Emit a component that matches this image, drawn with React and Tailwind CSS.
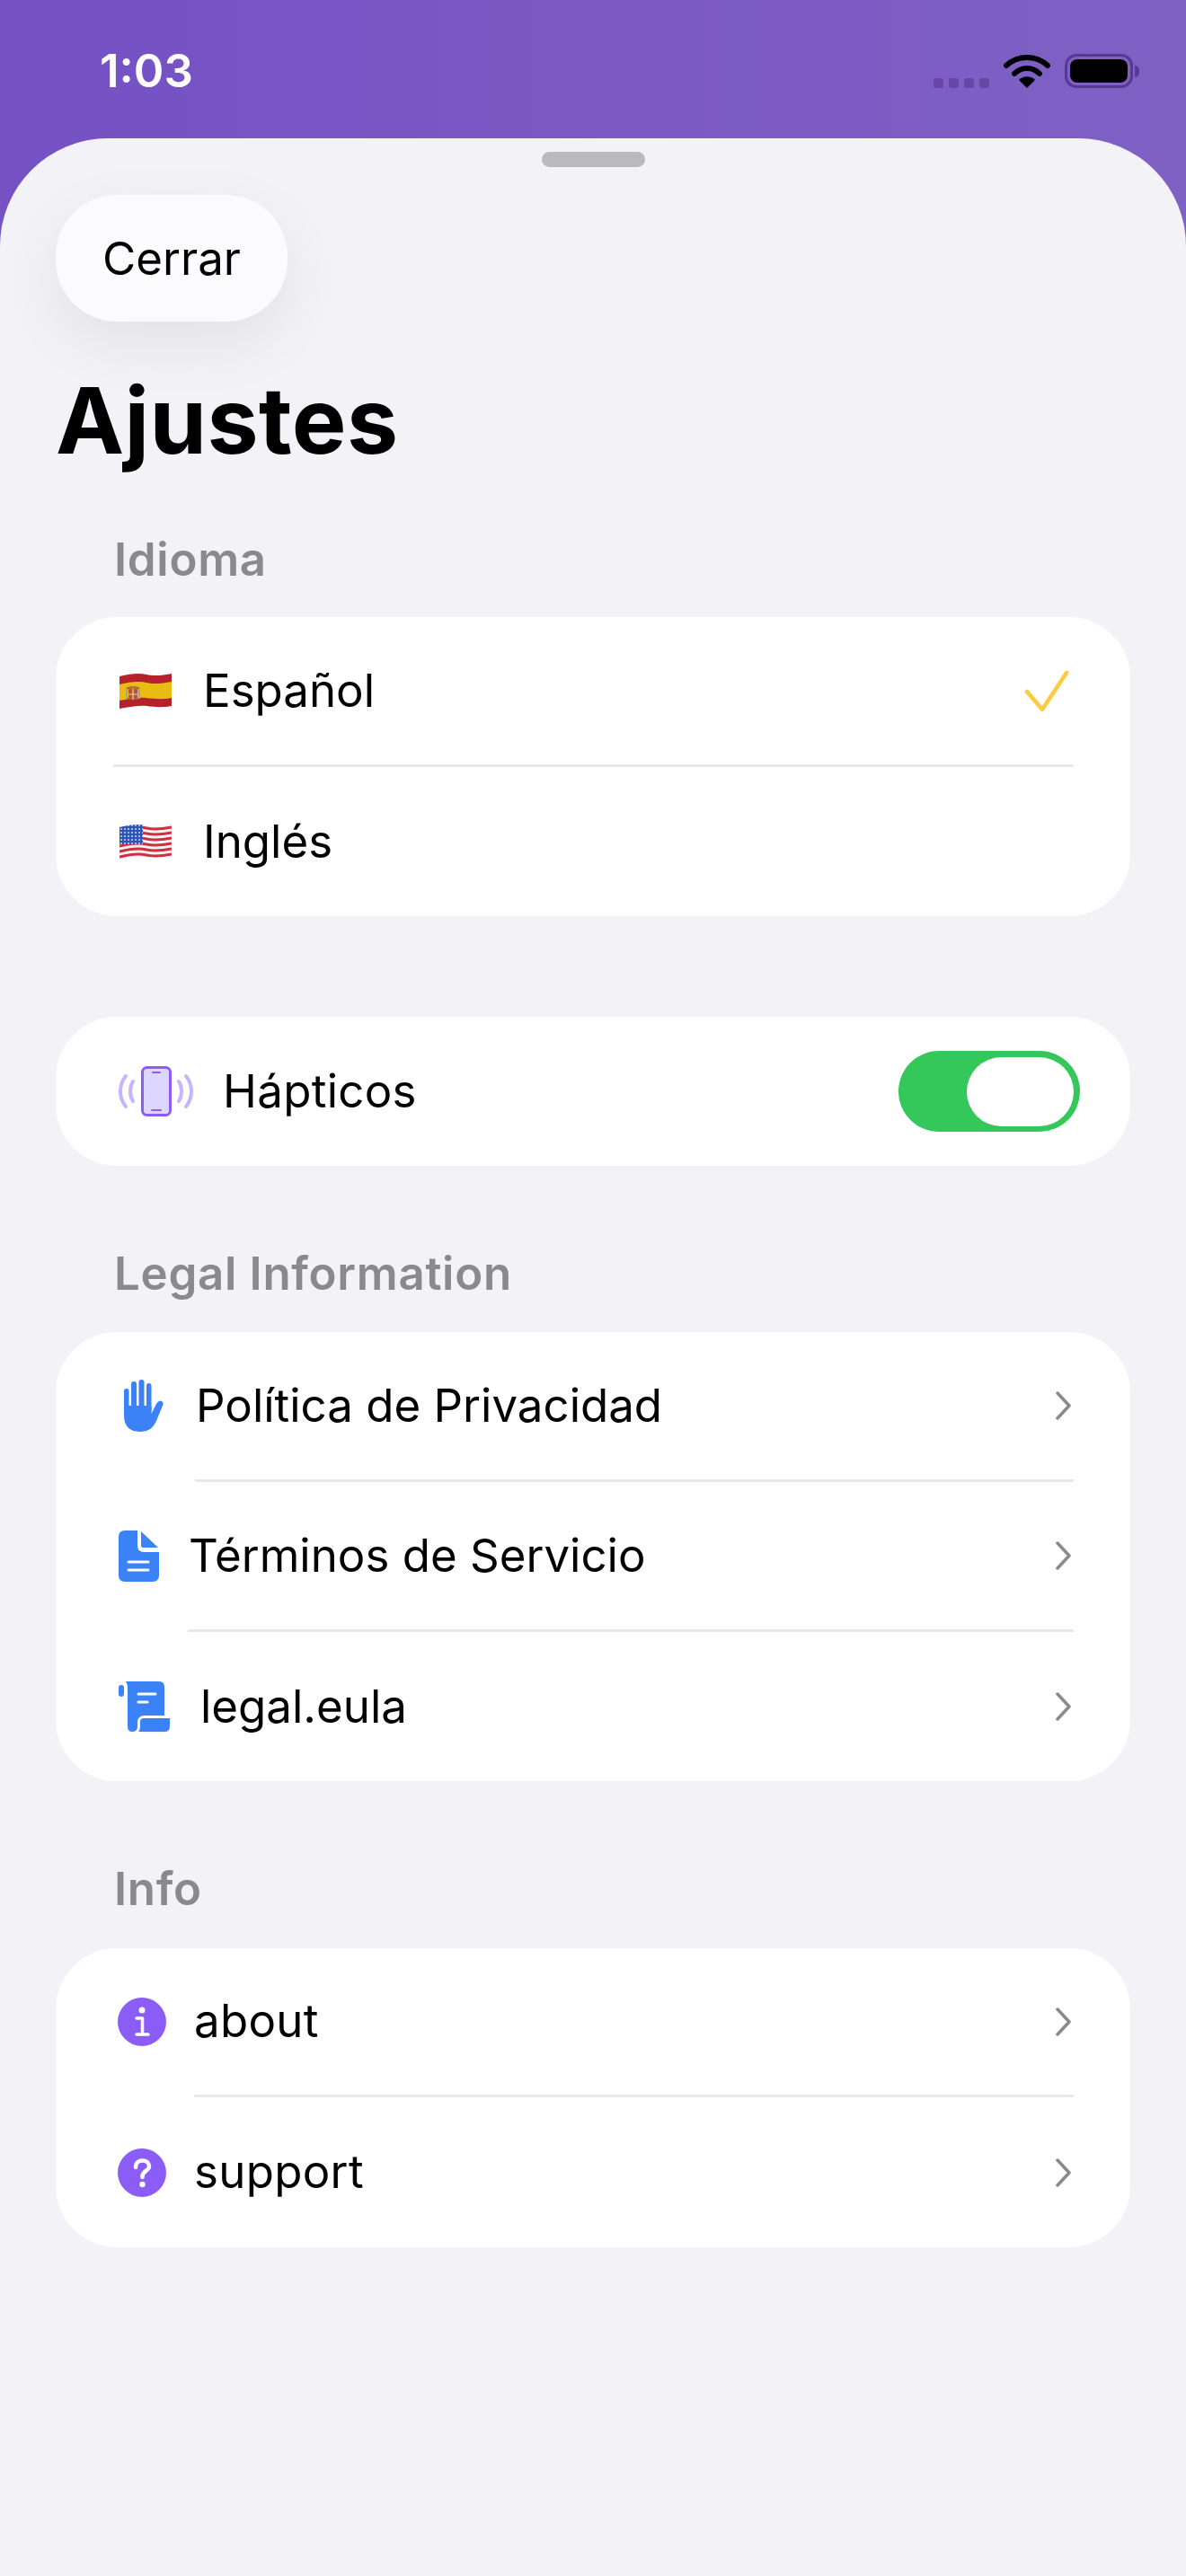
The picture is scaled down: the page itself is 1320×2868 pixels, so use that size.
import React from 'react'

const font = { fontFamily: 'Inter, "Noto Sans", sans-serif' }

function SpainFlag() {
    return (
        <svg width="58" height="41" viewBox="0 0 58 41" className="shrink-0">
            <path d="M0 4C12 1 22 0 30 2S48 3 58 1V37C48 39 38 38 30 37S12 38 0 40Z" fill="#b5222c" />
            <path d="M0 13C12 10 22 9 30 11S48 12 58 10V28C48 30 38 29 30 28S12 29 0 31Z" fill="#eabb12" />
            <path d="M8 17H22M9 29H21" stroke="#8f6a3a" strokeWidth="2" />
            <rect x="10" y="15" width="10" height="3" rx="1.500" fill="#b5752d" />
            <path d="M10 18H20V26Q20 30 15 30Q10 30 10 26Z" fill="#b9503a" />
            <path d="M15 18V30M10 24H20" stroke="#e8d9b0" strokeWidth="1.200" />
            <rect x="7" y="18" width="2" height="11" fill="#a9a196" />
            <rect x="21" y="18" width="2" height="11" fill="#a9a196" />
        </svg>
    )
}

function UsaFlag() {
    const stripes = [6, 12, 18, 24, 30, 36]
    return (
        <svg width="58" height="41" viewBox="0 0 58 41" className="shrink-0">
            <defs>
                <clipPath id="us-wave">
                    <path d="M0 4C12 1 22 0 30 2S48 3 58 1V37C48 39 38 38 30 37S12 38 0 40Z" />
                </clipPath>
                <pattern id="us-stars" width="4" height="4" patternUnits="userSpaceOnUse">
                    <circle cx="2" cy="2" r="0.9" fill="#dfe6f7" />
                </pattern>
            </defs>
            <g clipPath="url(#us-wave)">
                <rect width="58" height="41" fill="#f5f3f3" />
                {stripes.map((y) => (
                    <path key={y} d={`M0 ${y + 1}C12 ${y - 2} 22 ${y - 3} 30 ${y - 1}S48 ${y} 58 ${y - 2}`} fill="none" stroke="#cf2f3f" strokeWidth="3" />
                ))}
                <rect width="26" height="23" fill="#2f55b4" />
                <rect width="26" height="23" fill="url(#us-stars)" />
            </g>
        </svg>
    )
}

function HapticsIcon() {
    return (
        <svg width="85" height="56" viewBox="0 0 85 56" fill="none" className="shrink-0">
            <rect x="27.5" y="1.5" width="31" height="53" rx="5" fill="#ddd6fe" stroke="#8b5cf6" strokeWidth="3" />
            <path d="M39 7H47M38 49H48" stroke="#8b5cf6" strokeWidth="2" strokeLinecap="round" />
            <g stroke="#c4b5fd" strokeWidth="4" strokeLinecap="round">
                <path d="M17 17C13 23 13 33 17 39" />
                <path d="M9 11C1 21 1 35 9 45" />
                <path d="M68 17C72 23 72 33 68 39" />
                <path d="M76 11C84 21 84 35 76 45" />
            </g>
        </svg>
    )
}

function HandIcon() {
    return (
        <svg width="44" height="58" viewBox="0 0 44 58" fill="#3b82f6" className="shrink-0">
            <rect x="0" y="10" width="5.5" height="30" rx="2.75" />
            <rect x="8" y="2" width="6" height="36" rx="3" />
            <rect x="16.5" y="0" width="6" height="38" rx="3" />
            <rect x="25" y="4" width="5.5" height="34" rx="2.75" />
            <path d="M0 29H30.5V38L36 27Q39 22 42 24Q44.500 25.500 43 29L36 46Q31 58 19 58Q0 58 0 40Z" />
        </svg>
    )
}

function DocIcon() {
    return (
        <svg width="45" height="57" viewBox="0 0 45 57" className="shrink-0">
            <path d="M7 0H21V17Q21 24 28 24H45V50Q45 57 38 57H7Q0 57 0 50V7Q0 0 7 0Z" fill="#3b82f6" />
            <path d="M25 1L44 19H27Q25 19 25 17Z" fill="#3b82f6" />
            <path d="M11 35H33M11 44H33" stroke="#fff" strokeWidth="3" strokeLinecap="round" />
        </svg>
    )
}

function ScrollIcon() {
    return (
        <svg width="57" height="56" viewBox="0 0 57 56" className="shrink-0">
            <rect x="0" y="4" width="6" height="13" rx="3" fill="#3b82f6" />
            <path d="M8 0H45Q51 0 51 6V38H29Q21 38 21 46V50Q21 56 15 56Q10 56 10 50V8Q10 3 8 0Z" fill="#3b82f6" />
            <path d="M28 41H57V50Q57 56 51 56H22Q24 54 24 50V45Q24 41 28 41Z" fill="#3b82f6" />
            <path d="M22 14H41M22 23H32" stroke="#fff" strokeWidth="3" strokeLinecap="round" />
        </svg>
    )
}

function InfoIcon() {
    return (
        <svg width="54" height="54" viewBox="0 0 54 54" className="shrink-0">
            <circle cx="27" cy="27" r="27" fill="#8b5cf6" />
            <circle cx="27" cy="14" r="3.500" fill="#fff" />
            <path d="M21 23H27.500V41M21 41H34" fill="none" stroke="#fff" strokeWidth="3.500" strokeLinecap="round" strokeLinejoin="round" />
        </svg>
    )
}

function QuestionIcon() {
    return (
        <svg width="54" height="54" viewBox="0 0 54 54" className="shrink-0">
            <circle cx="27" cy="27" r="27" fill="#8b5cf6" />
            <path d="M20 21C20 16 23 13.500 27.500 13.500C32 13.500 35 16 35 20C35 25 27.500 25 27.500 31V32" fill="none" stroke="#fff" strokeWidth="4.500" strokeLinecap="round" />
            <circle cx="27.500" cy="40" r="3.200" fill="#fff" />
        </svg>
    )
}

function Chevron() {
    return (
        <svg width="22" height="34" viewBox="0 0 22 34" fill="none" className="shrink-0">
            <path d="M7 3L20 17L7 31" stroke="#8a8a8e" strokeWidth="3.500" strokeLinecap="round" strokeLinejoin="round" />
        </svg>
    )
}

function SectionTitle({ children, className }) {
    return <h2 className={`pl-[65px] text-[51px] leading-[62px] font-semibold text-[#8a8a8e] tracking-[0.7px] ${className}`}>{children}</h2>
}

function Divider({ left }) {
    return (
        <div className={`h-[3px] bg-[#e8e8ec] mr-[63px] ${left}`} />
    )
}

export default function App() {
    return (
        <div className="w-[1320px] h-[2868px] flex flex-col bg-gradient-to-r from-[#7551c4] to-[#7f61c4] overflow-hidden" style={font}>
            <header className="h-[154px] shrink-0 flex justify-between pl-[111px] pr-[52px]">
                <span className="mt-[50px] text-[51px] leading-[58px] font-semibold text-white tracking-[0px]">1:03</span>
                <div className="flex items-start pt-[60px]">
                    <div className="flex gap-[6px] mt-[27px] mr-[16px]">
                        <span className="w-[11px] h-[11px] rounded-[3px] bg-[#6747a6]" />
                        <span className="w-[11px] h-[11px] rounded-[3px] bg-[#6747a6]" />
                        <span className="w-[11px] h-[11px] rounded-[3px] bg-[#6747a6]" />
                        <span className="w-[11px] h-[11px] rounded-[3px] bg-[#6747a6]" />
                    </div>
                    <svg width="52" height="38" viewBox="0 0 52 38" fill="none" className="mr-[16px]">
                        <path d="M3 13C16 1 36 1 49 13" stroke="#000" strokeWidth="6" strokeLinecap="round" />
                        <path d="M12 22C20 14 32 14 40 22" stroke="#000" strokeWidth="6" strokeLinecap="round" />
                        <path d="M26 38L17 29C22 24 30 24 35 29Z" fill="#000" />
                    </svg>
                    <div className="w-[76px] h-[38px] rounded-[13px] border-[3px] border-[#553a8e] p-[3px]">
                        <div className="w-full h-full rounded-[8px] bg-black" />
                    </div>
                    <div className="w-[5px] h-[13px] mt-[13px] ml-[2px] rounded-r-full bg-[#553a8e]" />
                </div>
            </header>

            <main className="flex-1 bg-[#f2f2f7] rounded-t-[120px] px-[62px]">
                <div className="w-[115px] h-[17px] mt-[15px] mx-auto rounded-full bg-[#b9b9bf]" />
                <button className="mt-[31px] w-[258px] h-[141px] rounded-[68px] bg-[#fbfbfe] shadow-[0_24px_70px_rgba(0,0,0,0.07)] text-[51px] leading-[62px] text-black tracking-[0px] block">
                    Cerrar
                </button>
                <h1 className="mt-[48px] text-[102px] leading-[124px] font-bold text-black tracking-[0.4px]">Ajustes</h1>

                <SectionTitle className="mt-[62px]">Idioma</SectionTitle>
                <section className="mt-[33px] bg-white rounded-[68px]">
                    <div className="h-[164px] flex items-center pl-[71px] pr-[68px]">
                        <SpainFlag />
                        <span className="ml-[35px] text-[51px] tracking-[0px] flex-1">Español</span>
                        <svg width="50" height="50" viewBox="0 0 50 50" fill="none">
                            <path d="M3 26L20 46L47 5" stroke="#fdcb3f" strokeWidth="4.500" strokeLinecap="round" strokeLinejoin="round" />
                        </svg>
                    </div>
                    <Divider left="ml-[64px]" />
                    <div className="h-[166px] flex items-center pl-[71px]">
                        <UsaFlag />
                        <span className="ml-[35px] text-[51px] tracking-[0px]">Inglés</span>
                    </div>
                </section>

                <section className="mt-[112px] h-[166px] bg-white rounded-[68px] flex items-center pl-[69px] pr-[56px]">
                    <HapticsIcon />
                    <span className="ml-[32px] flex-1 text-[51px] tracking-[0.3px]">Hápticos</span>
                    <div className="w-[202px] h-[90px] rounded-full bg-[#34c759] flex justify-end items-center pr-[7px]">
                        <div className="w-[119px] h-[77px] rounded-full bg-white" />
                    </div>
                </section>

                <SectionTitle className="mt-[89px]">Legal Information</SectionTitle>
                <section className="mt-[34px] bg-white rounded-[68px]">
                    <div className="h-[164px] flex items-center pl-[76px] pr-[66px]">
                        <HandIcon />
                        <span className="ml-[36px] flex-1 text-[51px] tracking-[0px]">Política de Privacidad</span>
                        <Chevron />
                    </div>
                    <Divider left="ml-[155px]" />
                    <div className="h-[164px] flex items-center pl-[70px] pr-[66px]">
                        <DocIcon />
                        <span className="ml-[33px] flex-1 text-[51px] tracking-[0px]">Términos de Servicio</span>
                        <Chevron />
                    </div>
                    <Divider left="ml-[147px]" />
                    <div className="h-[166px] flex items-center pl-[70px] pr-[66px]">
                        <ScrollIcon />
                        <span className="ml-[34px] flex-1 text-[51px] tracking-[0px]">legal.eula</span>
                        <Chevron />
                    </div>
                </section>

                <SectionTitle className="mt-[89px]">Info</SectionTitle>
                <section className="mt-[35px] bg-white rounded-[68px]">
                    <div className="h-[163px] flex items-center pl-[69px] pr-[66px]">
                        <InfoIcon />
                        <span className="ml-[31px] flex-1 text-[51px] tracking-[0.3px]">about</span>
                        <Chevron />
                    </div>
                    <Divider left="ml-[154px]" />
                    <div className="h-[167px] flex items-center pl-[69px] pr-[66px]">
                        <QuestionIcon />
                        <span className="ml-[31px] flex-1 text-[51px] tracking-[0.3px]">support</span>
                        <Chevron />
                    </div>
                </section>
            </main>
        </div>
    )
}
